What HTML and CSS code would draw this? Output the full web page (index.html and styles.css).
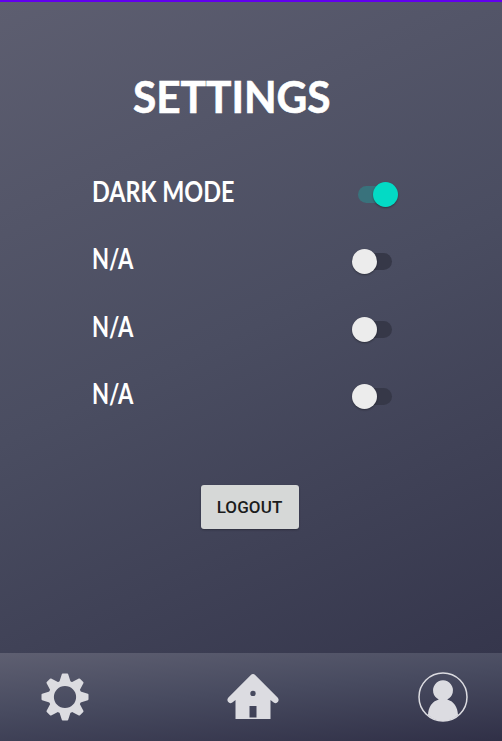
FILE: index.html
```html
<!DOCTYPE html>
<html lang="en">
<head>
<meta charset="utf-8">
<title>Settings</title>
<link rel="stylesheet" href="styles.css">
</head>
<body>
<main class="screen">
  <h1 class="title">SETTINGS</h1>
  <section class="options">
    <div class="option"><span class="label wide">DARK MODE</span><span class="switch on" role="switch" aria-checked="true"></span></div>
    <div class="option"><span class="label">N/A</span><span class="switch" role="switch" aria-checked="false"></span></div>
    <div class="option"><span class="label">N/A</span><span class="switch" role="switch" aria-checked="false"></span></div>
    <div class="option"><span class="label">N/A</span><span class="switch" role="switch" aria-checked="false"></span></div>
  </section>
  <button class="logout">LOGOUT</button>
</main>
<nav class="bar">
  <svg class="icon" width="48" height="48" viewBox="-24 -24 48 48">
    <defs><path id="tooth" d="M-6-14L-3.2-22.8Q-3-23.5-2.3-23.5H2.3Q3-23.5 3.2-22.8L6-14Z"/></defs>
    <use href="#tooth"/><use href="#tooth" transform="rotate(45)"/><use href="#tooth" transform="rotate(90)"/><use href="#tooth" transform="rotate(135)"/><use href="#tooth" transform="rotate(180)"/><use href="#tooth" transform="rotate(225)"/><use href="#tooth" transform="rotate(270)"/><use href="#tooth" transform="rotate(315)"/>
    <circle class="ring" r="13.8"/>
  </svg>
  <svg class="icon" width="52" height="48" viewBox="0 0 52 48">
    <path fill-rule="evenodd" d="M23.6 2.2Q26 0 28.4 2.2L50.6 24.5Q52.4 26.5 51 28.8Q49.2 31.2 46.7 29.6L43.5 27V46H8.5V27L5.3 29.6Q2.8 31.2 1 28.8Q-.4 26.5 1.4 24.5ZM22.5 33V44.5H29.5V33ZM26 17.7A2.7 2.7 0 1 0 26 23.1A2.7 2.7 0 1 0 26 17.7Z"/>
  </svg>
  <svg class="icon" width="50" height="50" viewBox="0 0 50 50">
    <circle class="outline" cx="25" cy="25" r="24"/>
    <path d="M10 43C10.3 35 14 29.3 20.8 27.4A10 10 0 1 1 29.2 27.4C36 29.3 39.7 35 40 43Q33.5 49 25 49T10 43Z"/>
  </svg>
</nav>
</body>
</html>
```
FILE: styles.css
```css
* { box-sizing: border-box; }
body {
  margin: 0;
  width: 502px;
  height: 741px;
  overflow: hidden;
  display: flex;
  flex-direction: column;
  background: #303048;
  font-family: Lato, sans-serif;
}
.screen {
  height: 653px;
  border-top: 2px solid #6200ee;
  background: linear-gradient(155deg, #5d5e70 0%, #4a4d61 50%, #35364c 100%);
}
.title {
  width: max-content;
  margin: 69px 0 0 133px;
  font-size: 43px;
  line-height: 52px;
  font-weight: 700;
  color: #fff;
  -webkit-text-stroke: .6px #fff;
  transform-origin: 0 50%;
  transform: scaleX(.985);
}
.options {
  margin: 51px 104px 0 92px;
}
.option {
  height: 67.4px;
  display: flex;
  justify-content: space-between;
  align-items: flex-start;
}
.label {
  font-size: 28px;
  line-height: 34px;
  font-weight: 700;
  color: #fff;
  white-space: nowrap;
  transform-origin: 0 50%;
  transform: scaleX(.79);
}
.wide { transform: scaleX(.835); }
.switch {
  display: flex;
  align-items: center;
  width: 34px;
  height: 17px;
  margin: 12px 6.5px 0 0;
  border-radius: 9px;
  background: #363848;
}
.switch::before {
  content: "";
  flex: none;
  width: 25px;
  height: 25px;
  margin-left: -6px;
  border-radius: 50%;
  background: #ececec;
  box-shadow: 0 1px 2px rgba(0, 0, 0, .35);
}
.switch.on {
  justify-content: flex-end;
  margin-right: 6px;
  background: #39727c;
}
.switch.on::before {
  margin: 0 -6px 0 0;
  background: #03dac5;
}
.logout {
  display: block;
  width: 98px;
  height: 44px;
  margin: 41px 0 0 200.5px;
  padding: 1px 0 0;
  border: 0;
  border-radius: 3px;
  background: #d6d8d7;
  box-shadow: 0 1px 2px rgba(0, 0, 0, .3);
  color: #1b1c1c;
  font: 500 17px/20px Roboto, sans-serif;
  letter-spacing: .1px;
}
.bar {
  height: 88px;
  display: flex;
  justify-content: space-between;
  align-items: center;
  padding: 0 34.5px 1px 40.5px;
  background: linear-gradient(175deg, #5e5f71 0%, #484b60 45%, #303047 100%);
}
.icon { fill: #dcdce1; }
.ring { fill: none; stroke: #dcdce1; stroke-width: 5.4; }
.outline { fill: none; stroke: #dcdce1; stroke-width: 1.5; }
```
